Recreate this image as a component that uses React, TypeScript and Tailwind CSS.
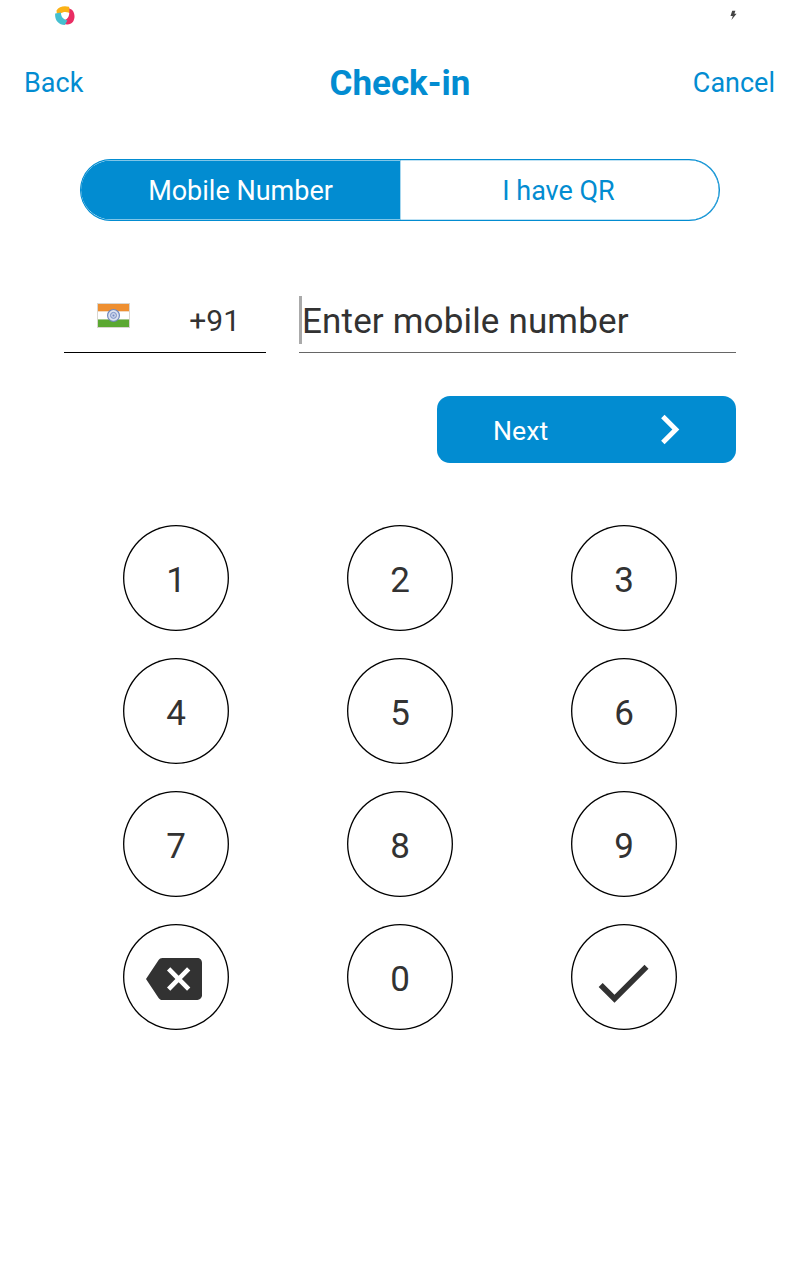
import React from "react";

function StatusBar() {
  return (
    <div className="flex h-8 items-start justify-between pl-[55px] pr-[63px]">
      <svg className="mt-1.5" width="20" height="20" viewBox="0 0 20 20">
        <path d="M1.5 4.5C4 .5 9 -.4 14 .8L16 8.4C13 5.4 9 5.2 5 7.6L1.8 7.4Z" fill="#fbb216" />
        <path d="M14.2 2.4C19.5 3.5 21 11 18 15.8C15.5 19 12 19.2 8 17.6L7.2 13.8C11 14.8 15.4 12 14.2 2.4Z" fill="#e92d63" />
        <path d="M.2 7.4L6 6.6C5.8 10.5 8 13.4 12.4 14.4L9.8 19C3.5 18.8-.6 14 .2 7.4Z" fill="#45bfd0" />
      </svg>
      <svg className="mt-2.5" width="7" height="11" viewBox="0 0 7 11">
        <path d="M2.2 .8H5.4L4.4 3.8H6.6L1.4 10 2.8 6H.5Z" fill="#444" />
      </svg>
    </div>
  );
}

function Flag() {
  return (
    <svg width="33" height="25" viewBox="0 0 33 25">
      <rect width="33" height="25" fill="#d9d6d0" />
      <rect x="1" y="1" width="31" height="7.5" fill="#ee8f31" />
      <rect x="1" y="8.5" width="31" height="8" fill="#fff" />
      <rect x="1" y="16.5" width="31" height="7.5" fill="#5ba831" />
      <circle cx="16.5" cy="12.4" r="5.9" fill="#dde3f1" stroke="#7188bd" strokeWidth="1.2" />
      <circle cx="16.5" cy="12.4" r="3" fill="#c9d3ea" stroke="#7d92c6" strokeWidth="1" />
      <circle cx="16.5" cy="12.4" r="1" fill="#6f86bf" />
    </svg>
  );
}

function Backspace() {
  return (
    <svg className="mt-[3px] mr-1" width="56" height="56" viewBox="0 0 24 24" fill="#323232">
      <path d="M22 3H7c-.69 0-1.23.35-1.59.88L0 12l5.41 8.11c.36.53.9.89 1.59.89h15c1.1 0 2-.9 2-2V5c0-1.1-.9-2-2-2zm-3 12.59L17.59 17 14 13.41 10.41 17 9 15.59 12.59 12 9 8.41 10.41 7 14 10.59 17.59 7 19 8.41 15.41 12 19 15.59z" />
    </svg>
  );
}

function Check() {
  return (
    <svg className="mt-3 mr-0.5" width="68" height="68" viewBox="0 0 24 24" fill="#323232">
      <path d="M9 16.17L4.83 12l-1.42 1.41L9 19 21 7l-1.41-1.41z" />
    </svg>
  );
}

const keys: React.ReactNode[] = ["1", "2", "3", "4", "5", "6", "7", "8", "9", <Backspace />, "0", <Check />];

export default function App() {
  return (
    <div className="flex h-[1280px] w-[800px] flex-col overflow-hidden bg-white font-['Roboto',sans-serif] text-[#323232]">
      <StatusBar />
      <header className="grid h-[102px] grid-cols-3 items-center px-6 pt-0.5 text-[27px] text-[#028cd1]">
        <button className="pb-0.5 text-left">Back</button>
        <h1 className="text-center text-[35px] font-bold">Check-in</h1>
        <button className="pr-px pb-0.5 text-right">Cancel</button>
      </header>

      <div className="mx-20 mt-[25px] flex h-[62px] text-[27px]">
        <button className="w-1/2 rounded-l-full border border-r-0 border-[#028cd1] bg-[#028cd1] pt-0.5 text-white shadow-[inset_0_0.4px_0_0_#ffffff,inset_0_-0.4px_0_0_#ffffff]">Mobile Number</button>
        <button className="w-1/2 rounded-r-full border border-l-0 border-[#028cd1] pt-0.5 pr-0.5 text-[#028cd1] shadow-[inset_0_0_0_0.35px_#028cd1]">I have QR</button>
      </div>

      <div className="mx-16 mt-[75px] flex h-[57px] justify-between">
        <div className="flex w-[202px] items-start justify-between border-b border-black pl-[33px] pr-[26px]">
          <div className="pt-[7px]"><Flag /></div>
          <span className="text-[30px] leading-[50px]">+91</span>
        </div>
        <div className="flex w-[437px] items-start border-b border-[#666]">
          <span className="h-12 w-[3px] shrink-0 bg-[#aaa]" />
          <span className="text-[35px] leading-[52px] tracking-[0.16px] whitespace-nowrap">Enter mobile number</span>
        </div>
      </div>

      <button className="mt-[43px] mr-16 flex h-[67px] w-[299px] items-center justify-between self-end rounded-[13px] bg-[#028cd1] pr-[37px] pl-14 text-[26.67px] text-white">
        <span className="pt-[3px]">Next</span>
        <svg className="-mt-px" width="59" height="59" viewBox="0 0 24 24" fill="currentColor">
          <path d="M10 6L8.59 7.41 13.17 12l-4.58 4.59L10 18l6-6z" />
        </svg>
      </button>

      <div className="mx-16 mt-[62px] grid grid-cols-3 justify-items-center gap-y-[27px]">
        {keys.map((key, i) => (
          <button key={i} className="flex size-[106px] items-center justify-center rounded-full shadow-[inset_0_0_0_1.33px_#000] text-[35px]">
            {typeof key === "string" ? <span className="pt-[6px]">{key}</span> : key}
          </button>
        ))}
      </div>
    </div>
  );
}
